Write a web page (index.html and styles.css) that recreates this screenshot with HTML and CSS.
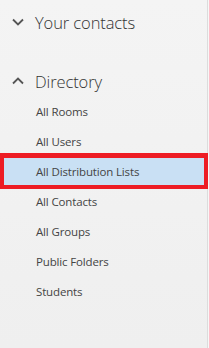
FILE: index.html
```html
<!DOCTYPE html>
<html>
<head>
<meta charset="utf-8">
<link rel="stylesheet" href="styles.css">
</head>
<body>
<nav class="panel">
  <div class="group-header first">
    <svg class="chev" width="12" height="8" viewBox="0 0 12 8"><path d="M1 1.5 L6 6.5 L11 1.5" fill="none" stroke="#555" stroke-width="1.8"/></svg>
    <span class="group-title">Your contacts</span>
  </div>
  <div class="group-header second">
    <svg class="chev" width="12" height="8" viewBox="0 0 12 8"><path d="M1 6.5 L6 1.5 L11 6.5" fill="none" stroke="#555" stroke-width="1.8"/></svg>
    <span class="group-title">Directory</span>
  </div>
  <ul class="items">
    <li class="item">All Rooms</li>
    <li class="item">All Users</li>
    <li class="item selected">All Distribution Lists<span class="mark"></span></li>
    <li class="item">All Contacts</li>
    <li class="item">All Groups</li>
    <li class="item">Public Folders</li>
    <li class="item">Students</li>
  </ul>
</nav>
</body>
</html>
```
FILE: styles.css
```css
html, body {
  margin: 0;
  padding: 0;
  height: 100%;
}
body {
  background: #f7f7f7;
  font-family: "Open Sans", "Noto Sans", sans-serif;
}
.panel {
  width: 207px;
  height: 348px;
  border-right: 1px solid #dcdcdc;
  background: linear-gradient(#f4f4f4, #efefef);
}
.group-header {
  display: flex;
  align-items: center;
  padding-left: 12px;
  color: #333;
}
.group-header.first {
  height: 44px;
}
.group-header.second {
  margin-top: 21px;
  height: 32px;
}
.chev {
  display: block;
  flex: none;
}
.group-title {
  margin-left: 11px;
  font-size: 16.5px;
  font-weight: 300;
  letter-spacing: -0.1px;
}
.items {
  list-style: none;
  margin: 0;
  padding: 0;
}
.item {
  position: relative;
  height: 30px;
  line-height: 30px;
  padding-left: 36px;
  font-size: 11.5px;
  color: #444;
  letter-spacing: -0.15px;
}
.item.selected {
  background: #c9e0f4;
}
.mark {
  position: absolute;
  left: 0;
  top: -4px;
  width: 200px;
  height: 27px;
  border: 4px solid #ed1c24;
  border-top-width: 5px;
}
```
